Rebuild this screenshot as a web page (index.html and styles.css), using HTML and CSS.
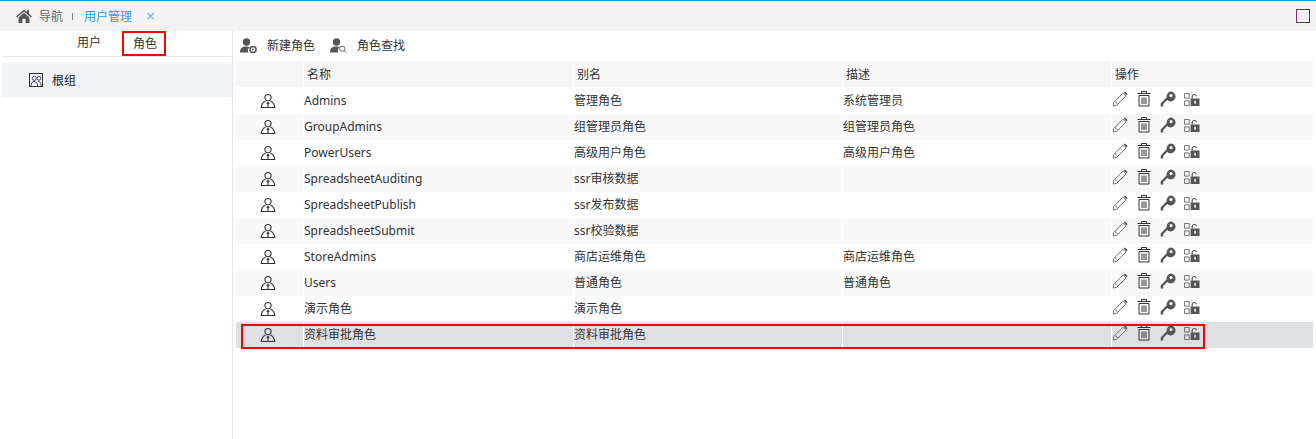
FILE: index.html
```html
<!DOCTYPE html>
<html lang="zh-CN">
<head>
<meta charset="UTF-8">
<title>用户管理</title>
<link rel="stylesheet" href="styles.css">
</head>
<body>
<svg class="defs" width="0" height="0">
  <symbol id="i-user" viewBox="0 0 16 16">
    <circle cx="8" cy="4.6" r="3.1" fill="none" stroke="#333" stroke-width="1.1"/>
    <path d="M5.6 8 C3.5 9 1.6 11 1.2 14.5 H14.8 C14.4 11 12.5 9 10.4 8 M8 9.5 V14.5 M6.8 10.8 L8 9.3 L9.2 10.8" fill="none" stroke="#333" stroke-width="1.1"/>
  </symbol>
  <symbol id="i-edit" viewBox="0 0 16 16">
    <path d="M1.2 15 L1.8 11.5 L11 2.2 L13.9 5.1 L4.7 14.3 Z M3 10.5 L5.8 13.2" fill="none" stroke="#777" stroke-width="1"/>
    <path d="M11.6 1.6 L13 .4 L15.6 3 L14.4 4.4 Z" fill="#555"/>
  </symbol>
  <symbol id="i-trash" viewBox="0 0 16 16">
    <path d="M1.5 2.5 H14.5 M5.5 2.5 V.5 H10.5 V2.5 M3 4.5 V15 H13 V4.5 M3 4.5 H13 M6 6.5 V13 M8 6.5 V13 M10 6.5 V13" fill="none" stroke="#333" stroke-width="1"/>
  </symbol>
  <symbol id="i-key" viewBox="0 0 16 16">
    <path d="M10.5 .6 A4.9 4.9 0 1 1 7.2 9 L3.2 13 V15.4 H.7 V12.4 L6.7 6.2 A4.9 4.9 0 0 1 10.5 .6 Z M11 3 A1.6 1.6 0 1 0 11 6.2 A1.6 1.6 0 1 0 11 3 Z" fill="#555" fill-rule="evenodd"/>
  </symbol>
  <symbol id="i-lock" viewBox="0 0 17 14">
    <path d="M.5 .5 H5.5 V5.5 H.5 Z M.5 8.5 H5.5 V13.5 H.5 Z" fill="none" stroke="#666"/>
    <path d="M8 6 V3.4 A3.1 3.1 0 0 1 14 3.4 H12.6 A1.7 1.7 0 0 0 9.4 3.4 V6 Z" fill="#555"/>
    <path d="M7 6 H16.6 V14 H7 Z M11 8.4 V11.6 H12.6 V8.4 Z" fill="#555" fill-rule="evenodd"/>
  </symbol>
  <symbol id="i-add" viewBox="0 0 17 15">
    <circle cx="6.5" cy="4" r="3.7" fill="#555"/>
    <path d="M0 14.5 C0 10 2.5 8.5 6.5 8.5 C8 8.5 9 8.7 10 9.2 A4 4 0 0 0 8.4 14.5 Z" fill="#555"/>
    <circle cx="13" cy="11.5" r="3" fill="none" stroke="#555" stroke-width="1.6"/>
    <circle cx="13" cy="11.5" r=".9" fill="#555"/>
  </symbol>
  <symbol id="i-find" viewBox="0 0 17 15">
    <circle cx="6.5" cy="4" r="3.7" fill="#555"/>
    <path d="M0 14.5 C0 10 2.5 8.5 6.5 8.5 C8 8.5 9 8.7 10 9.2 A4 4 0 0 0 8.4 14.5 Z" fill="#555"/>
    <circle cx="12.3" cy="10.8" r="2.6" fill="none" stroke="#666"/>
    <path d="M14.2 12.8 L16.4 14.8" stroke="#666"/>
  </symbol>
</svg>

<header class="tabbar">
  <svg class="home" viewBox="0 0 16 14"><path d="M8 .4 L11 3 V1.2 H13 V4.7 L16 7.4 L15 8.4 L8 2.4 L1 8.4 L0 7.4 Z M2.6 8.4 L8 3.8 L13.4 8.4 V14 H9.6 V9.8 H6.4 V14 H2.6 Z" fill="#555"/></svg>
  <span class="tab">导航</span>
  <span class="tab-sep"></span>
  <span class="tab tab-active">用户管理</span>
  <span class="tab-close">×</span>
  <span class="max-box"></span>
</header>

<div class="main">
  <aside class="side">
    <nav class="side-tabs">
      <span class="side-tab">用户</span>
      <span class="side-tab side-tab-on">角色</span>
    </nav>
    <div class="group">
      <svg class="group-icon" viewBox="0 0 14 14">
        <rect x=".5" y=".5" width="13" height="13" fill="none" stroke="#333"/>
        <circle cx="5.3" cy="5.3" r="2.1" fill="none" stroke="#4a4a78"/>
        <circle cx="10" cy="5.3" r="1.9" fill="none" stroke="#4a4a78"/>
        <path d="M2 13 C2 10 3.4 8.4 5.3 8.4 C7.2 8.4 8.6 10 8.6 13 M8.8 8.4 C11 8.2 12.2 10 12.2 13" fill="none" stroke="#4a4a78"/>
      </svg>
      <span>根组</span>
    </div>
  </aside>

  <section class="content">
    <div class="toolbar">
      <span class="tool"><svg class="tool-icon"><use href="#i-add"/></svg>新建角色</span>
      <span class="tool"><svg class="tool-icon"><use href="#i-find"/></svg>角色查找</span>
    </div>
    <table class="grid">
      <colgroup>
        <col class="c-icon"><col class="c-first"><col class="c-text"><col class="c-text"><col>
      </colgroup>
      <thead>
        <tr><th></th><th>名称</th><th>别名</th><th>描述</th><th>操作</th></tr>
      </thead>
      <tbody id="rows"></tbody>
    </table>
    <div class="row-mark"></div>
  </section>
</div>

<script>
var roles = [
  ['Admins', '管理角色', '系统管理员'],
  ['GroupAdmins', '组管理员角色', '组管理员角色'],
  ['PowerUsers', '高级用户角色', '高级用户角色'],
  ['SpreadsheetAuditing', 'ssr审核数据', ''],
  ['SpreadsheetPublish', 'ssr发布数据', ''],
  ['SpreadsheetSubmit', 'ssr校验数据', ''],
  ['StoreAdmins', '商店运维角色', '商店运维角色'],
  ['Users', '普通角色', '普通角色'],
  ['演示角色', '演示角色', ''],
  ['资料审批角色', '资料审批角色', '']
];
var html = '';
roles.forEach(function (r, i) {
  html += '<tr' + (i === roles.length - 1 ? ' class="selected"' : '') + '>' +
    '<td class="cell-icon"><svg class="user-icon"><use href="#i-user"/></svg></td>' +
    '<td>' + r[0] + '</td><td>' + r[1] + '</td><td>' + r[2] + '</td>' +
    '<td class="ops">' +
      '<svg class="op"><use href="#i-edit"/></svg>' +
      '<svg class="op"><use href="#i-trash"/></svg>' +
      '<svg class="op"><use href="#i-key"/></svg>' +
      '<svg class="op op-lock"><use href="#i-lock"/></svg>' +
    '</td></tr>';
});
document.getElementById('rows').innerHTML = html;
</script>
</body>
</html>
```

FILE: styles.css
```css
* { margin:0; padding:0; box-sizing:border-box; }
html, body { height:100%; }
body { font-family:"Noto Sans", "Noto Sans CJK SC", sans-serif; font-size:12px; color:#333; background:#fff; overflow:hidden; display:flex; flex-direction:column; }
.defs { position:absolute; }

.tabbar { height:31px; flex-shrink:0; background:#f4f4f4; border-top:1px solid #00a0e9; display:flex; align-items:center; padding:0 6px 0 16px; }
.home { width:16px; height:14px; margin-right:7px; }
.tab { color:#666; }
.tab-sep { width:1px; height:7px; background:#888; margin:0 11px 0 9px; }
.tab-active { color:#2a9ae6; }
.tab-close { color:#8fa8dc; font-size:16px; line-height:16px; margin-left:14px; }
.max-box { width:14px; height:14px; border:1px solid #444; border-left-color:#8a2a8a; margin-left:auto; }

.main { flex:1; display:flex; min-height:0; }
.side { width:233px; flex-shrink:0; border-right:1px solid #e3e5f0; }
.side-tabs { height:26px; display:flex; border-bottom:1px solid #e6e6e6; margin-left:2px; padding-left:65px; }
.side-tab { width:44px; height:25px; margin-right:1px; line-height:23px; text-align:center; }
.side-tab:first-child { margin-right:11px; }
.side-tab-on { border:2px solid #f00; height:25px; line-height:21px; padding-left:2px; }
.group { height:34px; margin:6px 0 0 2px; background:#f1f3f6; display:flex; align-items:center; padding-left:27px; gap:9px; color:#222; }
.group-icon { width:14px; height:14px; }

.content { flex:1; min-width:0; padding-left:3px; position:relative; }
.toolbar { height:30px; display:flex; align-items:center; gap:15px; padding:0 0 2px 4px; }
.tool { display:flex; align-items:center; gap:10px; }
.tool-icon { width:17px; height:15px; }

.grid { width:1077px; border-collapse:separate; border-spacing:0; table-layout:fixed; }
.c-icon { width:67px; }
.c-first { width:270px; }
.c-text { width:269px; }
.grid th { height:27px; background:#f6f6f6; font-weight:normal; text-align:left; padding-left:3px; border-left:1px solid #fff; border-bottom:1px solid #fff; }
.grid th:first-child { border-left:0; }
.grid td { height:26px; padding-bottom:2px; border-left:1px solid #fff; white-space:nowrap; }
.grid td:first-child { border-left:0; }
.grid tbody tr:nth-child(even) { background:#f9f9fa; }
.grid tr.selected { background:#dfe0e3 !important; }

.user-icon { width:16px; height:16px; display:block; margin:2px 0 0 24px; }
.grid td.ops { font-size:0; padding-bottom:4px; }
.op { width:16px; height:16px; margin-right:8px; vertical-align:middle; }
.op-lock { width:16px; height:13px; margin-right:0; }

.row-mark { position:absolute; left:8px; top:293px; width:964px; height:25px; border:2px solid #f00; }
```
